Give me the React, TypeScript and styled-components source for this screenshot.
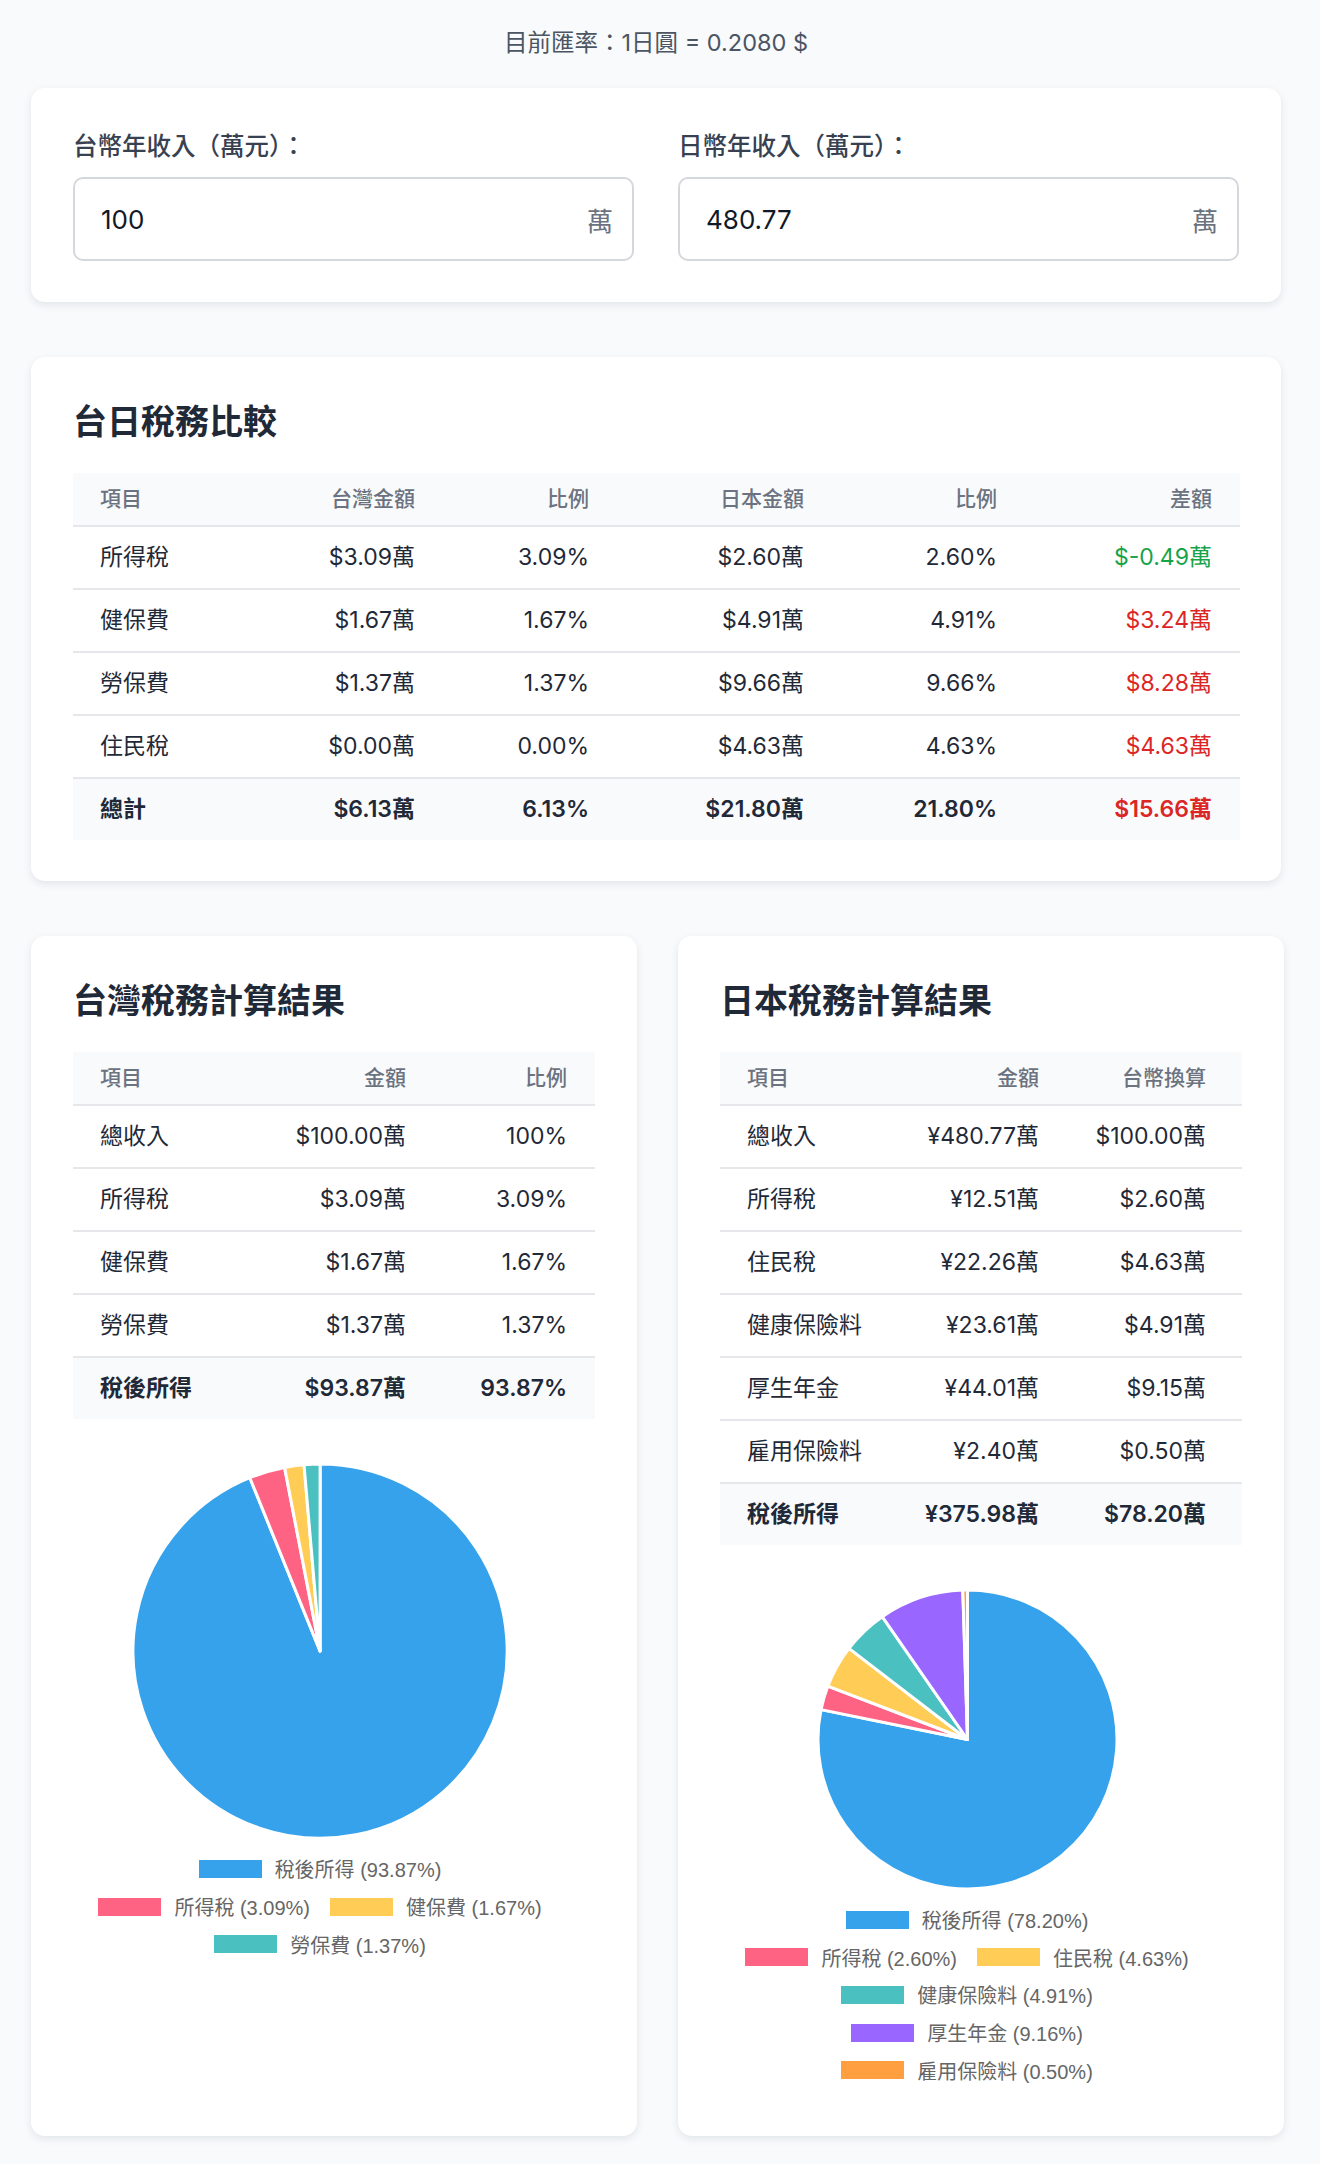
import React from "react";
import styled, { createGlobalStyle } from "styled-components";

const GlobalStyle = createGlobalStyle`
  * { box-sizing: border-box; }
  body {
    margin: 0;
    background: #f8fafc;
    font-family: Inter, "Noto Sans CJK TC", sans-serif;
    color: #1f2937;
  }
`;

const Page = styled.div`
  padding: 0 39px 27px 31px;
`;

const RateLine = styled.div`
  padding-top: 26px;
  margin-bottom: 28px;
  text-align: center;
  font-size: 23.5px;
  line-height: 34px;
  color: #4b5563;
`;

const Card = styled.section`
  background: #ffffff;
  border-radius: 14px;
  box-shadow: 0 3px 9px rgba(15, 23, 42, 0.09);
  padding: 42px 42px 41px;
  margin-bottom: 55px;
`;

const InputGrid = styled.div`
  display: grid;
  grid-template-columns: 1fr 1fr;
  gap: 44px;
`;

const Field = styled.label`
  display: flex;
  flex-direction: column;
  gap: 14px;
`;

const FieldLabel = styled.span`
  font-size: 24.5px;
  line-height: 33px;
  font-weight: 500;
  color: #374151;
`;

const InputBox = styled.div`
  display: flex;
  align-items: center;
  height: 84px;
  border: 2px solid #d4d7dc;
  border-radius: 10px;
  padding: 0 19px 0 24px;
  background: #fff;
`;

const NumberInput = styled.input`
  flex: 1;
  min-width: 0;
  border: none;
  outline: none;
  font-family: Inter, "Noto Sans CJK TC", sans-serif;
  font-size: 26px;
  color: #111827;
  background: transparent;
`;

const Suffix = styled.span`
  font-size: 26px;
  color: #6b7280;
`;

const Title = styled.h2`
  margin: 0 0 28px;
  font-size: 34px;
  line-height: 46px;
  font-weight: 700;
  color: #1f2937;
`;

const Table = styled.table<{ $lastPad?: number }>`
  width: 100%;
  border-collapse: collapse;
  table-layout: fixed;

  th, td {
    padding-left: 27px;
    padding-right: 28px;
    text-align: right;
    white-space: nowrap;
  }
  th:first-child, td:first-child { text-align: left; }
  th:last-child, td:last-child { padding-right: ${(p) => p.$lastPad ?? 28}px; }
`;

const Col = styled.col<{ $w: number }>`
  width: ${(p) => p.$w}px;
`;

const HeadRow = styled.tr`
  background: #f9fafb;
  border-bottom: 2px solid #e5e7eb;
`;

const Th = styled.th`
  padding-top: 12px;
  padding-bottom: 12px;
  font-size: 21px;
  line-height: 28px;
  font-weight: 500;
  color: #6b7280;
`;

const Row = styled.tr<{ $total?: boolean }>`
  border-bottom: ${(p) => (p.$total ? "none" : "2px solid #e5e7eb")};
  background: ${(p) => (p.$total ? "#f8fafc" : "transparent")};
  font-weight: ${(p) => (p.$total ? 600 : 400)};
`;

const Td = styled.td<{ $tone?: "up" | "down" }>`
  padding-top: 13px;
  padding-bottom: 14px;
  font-size: 23px;
  line-height: 34px;
  color: ${(p) =>
    p.$tone === "down" ? "#16a34a" : p.$tone === "up" ? "#dc2626" : "#1f2937"};
`;

const ResultGrid = styled.div`
  display: grid;
  grid-template-columns: 1fr 1fr;
  gap: 41px;
  align-items: stretch;

  ${Card} {
    margin-bottom: 0;
  }
`;

const ChartBox = styled.div`
  margin-top: 29px;
  height: 521px;
  padding: 15px 28px 6px 0;
  display: flex;
  flex-direction: column;
  align-items: center;
  gap: 11px;
`;

const Legend = styled.div`
  display: flex;
  flex-direction: column;
  align-items: center;
  font-family: "Liberation Sans", "Noto Sans CJK TC", sans-serif;
  font-size: 20px;
  color: #666666;
`;

const LegendRow = styled.div`
  display: flex;
  align-items: center;
  gap: 20px;
  height: 37.6px;
`;

const LegendItem = styled.div`
  display: flex;
  align-items: center;
  gap: 13px;
`;

const Swatch = styled.span<{ $color: string }>`
  width: 63px;
  height: 18px;
  background: ${(p) => p.$color};
`;

type Slice = { label: string; value: number; color: string };

const COLORS = {
  blue: "#36a2eb",
  pink: "#ff6384",
  yellow: "#ffcd56",
  teal: "#4bc0c0",
  purple: "#9966ff",
  orange: "#ff9f40",
};

const PieChart = ({ slices, rows }: { slices: Slice[]; rows: number[][] }) => {
  const size = 521 - 32 - rows.length * 37.6;
  const c = size / 2;
  const r = c - 1;
  let angle = -Math.PI / 2;
  const paths = slices.map((s) => {
    const start = angle;
    const end = angle + (s.value / 100) * Math.PI * 2;
    angle = end;
    const x1 = c + r * Math.cos(start);
    const y1 = c + r * Math.sin(start);
    const x2 = c + r * Math.cos(end);
    const y2 = c + r * Math.sin(end);
    const large = end - start > Math.PI ? 1 : 0;
    return {
      d: `M ${c} ${c} L ${x1} ${y1} A ${r} ${r} 0 ${large} 1 ${x2} ${y2} Z`,
      color: s.color,
    };
  });
  return (
    <ChartBox>
      <svg width={size} height={size} viewBox={`0 0 ${size} ${size}`}>
        {paths.map((p, i) => (
          <path key={i} d={p.d} fill={p.color} stroke="#fff" strokeWidth={3} strokeLinejoin="round" />
        ))}
      </svg>
      <Legend>
        {rows.map((row, i) => (
          <LegendRow key={i}>
            {row.map((idx) => (
              <LegendItem key={idx}>
                <Swatch $color={slices[idx].color} />
                <span>
                  {slices[idx].label} ({slices[idx].value.toFixed(2)}%)
                </span>
              </LegendItem>
            ))}
          </LegendRow>
        ))}
      </Legend>
    </ChartBox>
  );
};

const compareRows = [
  { name: "所得稅", tw: "$3.09萬", twp: "3.09%", jp: "$2.60萬", jpp: "2.60%", diff: "$-0.49萬", tone: "down" as const },
  { name: "健保費", tw: "$1.67萬", twp: "1.67%", jp: "$4.91萬", jpp: "4.91%", diff: "$3.24萬", tone: "up" as const },
  { name: "勞保費", tw: "$1.37萬", twp: "1.37%", jp: "$9.66萬", jpp: "9.66%", diff: "$8.28萬", tone: "up" as const },
  { name: "住民稅", tw: "$0.00萬", twp: "0.00%", jp: "$4.63萬", jpp: "4.63%", diff: "$4.63萬", tone: "up" as const },
  { name: "總計", tw: "$6.13萬", twp: "6.13%", jp: "$21.80萬", jpp: "21.80%", diff: "$15.66萬", tone: "up" as const, total: true },
];

const twRows = [
  ["總收入", "$100.00萬", "100%"],
  ["所得稅", "$3.09萬", "3.09%"],
  ["健保費", "$1.67萬", "1.67%"],
  ["勞保費", "$1.37萬", "1.37%"],
];

const jpRows = [
  ["總收入", "¥480.77萬", "$100.00萬"],
  ["所得稅", "¥12.51萬", "$2.60萬"],
  ["住民稅", "¥22.26萬", "$4.63萬"],
  ["健康保險料", "¥23.61萬", "$4.91萬"],
  ["厚生年金", "¥44.01萬", "$9.15萬"],
  ["雇用保險料", "¥2.40萬", "$0.50萬"],
];

const twSlices: Slice[] = [
  { label: "稅後所得", value: 93.87, color: COLORS.blue },
  { label: "所得稅", value: 3.09, color: COLORS.pink },
  { label: "健保費", value: 1.67, color: COLORS.yellow },
  { label: "勞保費", value: 1.37, color: COLORS.teal },
];

const jpSlices: Slice[] = [
  { label: "稅後所得", value: 78.2, color: COLORS.blue },
  { label: "所得稅", value: 2.6, color: COLORS.pink },
  { label: "住民稅", value: 4.63, color: COLORS.yellow },
  { label: "健康保險料", value: 4.91, color: COLORS.teal },
  { label: "厚生年金", value: 9.16, color: COLORS.purple },
  { label: "雇用保險料", value: 0.5, color: COLORS.orange },
];

const App = () => {
  return (
    <Page>
      <GlobalStyle />
      <RateLine>目前匯率：1日圓 = 0.2080 $</RateLine>

      <Card>
        <InputGrid>
          <Field>
            <FieldLabel>台幣年收入（萬元）：</FieldLabel>
            <InputBox>
              <NumberInput defaultValue="100" />
              <Suffix>萬</Suffix>
            </InputBox>
          </Field>
          <Field>
            <FieldLabel>日幣年收入（萬元）：</FieldLabel>
            <InputBox>
              <NumberInput defaultValue="480.77" />
              <Suffix>萬</Suffix>
            </InputBox>
          </Field>
        </InputGrid>
      </Card>

      <Card>
        <Title>台日稅務比較</Title>
        <Table>
          <colgroup>
            <Col $w={185} />
            <Col $w={185} />
            <Col $w={174} />
            <Col $w={215} />
            <Col $w={193} />
            <Col $w={215} />
          </colgroup>
          <thead>
            <HeadRow>
              <Th>項目</Th>
              <Th>台灣金額</Th>
              <Th>比例</Th>
              <Th>日本金額</Th>
              <Th>比例</Th>
              <Th>差額</Th>
            </HeadRow>
          </thead>
          <tbody>
            {compareRows.map((r) => (
              <Row key={r.name} $total={r.total}>
                <Td>{r.name}</Td>
                <Td>{r.tw}</Td>
                <Td>{r.twp}</Td>
                <Td>{r.jp}</Td>
                <Td>{r.jpp}</Td>
                <Td $tone={r.tone}>{r.diff}</Td>
              </Row>
            ))}
          </tbody>
        </Table>
      </Card>

      <ResultGrid>
        <Card>
          <Title>台灣稅務計算結果</Title>
          <Table>
            <colgroup>
              <Col $w={180} />
              <Col $w={181} />
              <Col $w={161} />
            </colgroup>
            <thead>
              <HeadRow>
                <Th>項目</Th>
                <Th>金額</Th>
                <Th>比例</Th>
              </HeadRow>
            </thead>
            <tbody>
              {twRows.map((r) => (
                <Row key={r[0]}>
                  <Td>{r[0]}</Td>
                  <Td>{r[1]}</Td>
                  <Td>{r[2]}</Td>
                </Row>
              ))}
              <Row $total>
                <Td>稅後所得</Td>
                <Td>$93.87萬</Td>
                <Td>93.87%</Td>
              </Row>
            </tbody>
          </Table>
          <PieChart slices={twSlices} rows={[[0], [1, 2], [3]]} />
        </Card>

        <Card>
          <Title>日本稅務計算結果</Title>
          <Table $lastPad={36}>
            <colgroup>
              <Col $w={170} />
              <Col $w={177} />
              <Col $w={175} />
            </colgroup>
            <thead>
              <HeadRow>
                <Th>項目</Th>
                <Th>金額</Th>
                <Th>台幣換算</Th>
              </HeadRow>
            </thead>
            <tbody>
              {jpRows.map((r) => (
                <Row key={r[0]}>
                  <Td>{r[0]}</Td>
                  <Td>{r[1]}</Td>
                  <Td>{r[2]}</Td>
                </Row>
              ))}
              <Row $total>
                <Td>稅後所得</Td>
                <Td>¥375.98萬</Td>
                <Td>$78.20萬</Td>
              </Row>
            </tbody>
          </Table>
          <PieChart slices={jpSlices} rows={[[0], [1, 2], [3], [4], [5]]} />
        </Card>
      </ResultGrid>
    </Page>
  );
};

export default App;
